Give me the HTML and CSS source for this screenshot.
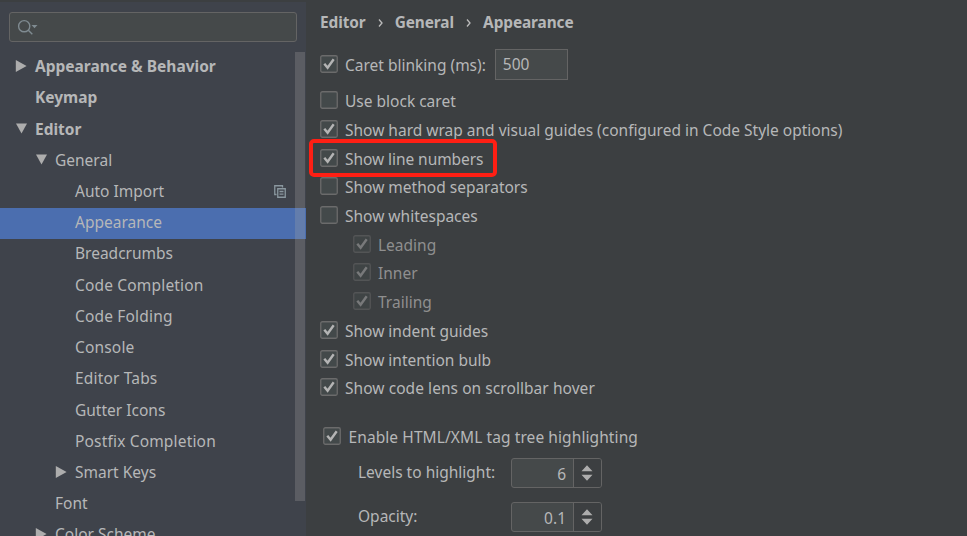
FILE: index.html
```html
<!DOCTYPE html>
<html lang="en">
<head>
<meta charset="utf-8">
<title>Settings</title>
<link rel="stylesheet" href="styles.css">
</head>
<body>
<svg class="defs" width="0" height="0">
  <symbol id="on" viewBox="0 0 18 18"><rect class="box" x=".75" y=".75" width="16.5" height="16.5" rx="1.5"/><path class="tick" d="M4.3 8.7 7.6 12.8 13.7 4.2"/></symbol>
  <symbol id="off" viewBox="0 0 18 18"><rect class="box" x=".75" y=".75" width="16.5" height="16.5" rx="1.5"/></symbol>
  <symbol id="right" viewBox="0 0 12 12"><path d="M.8 0 11.6 6 .8 12z"/></symbol>
  <symbol id="down" viewBox="0 0 12 12"><path d="M1 .6H12L6.5 10.6z"/></symbol>
  <symbol id="arrows" viewBox="0 0 12 18"><path d="M.5 7.2 6 1.2 11.5 7.2zM.5 10.8H11.5L6 16.8z"/></symbol>
</svg>
<div class="window">
  <aside class="sidebar">
    <div class="search">
      <svg width="22" height="18" viewBox="0 0 22 18"><circle cx="7.2" cy="7.2" r="5.6"/><path d="M11.3 11.3 15.3 15.3"/><path class="fill" d="M14.5 6H20.5L17.5 9.2z"/></svg>
    </div>
    <nav class="tree">
      <div class="node l0 bold"><svg class="arrow"><use href="#right"/></svg><span>Appearance &amp; Behavior</span></div>
      <div class="node l0 bold"><i class="arrow"></i><span>Keymap</span></div>
      <div class="node l0 bold"><svg class="arrow"><use href="#down"/></svg><span>Editor</span></div>
      <div class="node l1"><svg class="arrow"><use href="#down"/></svg><span>General</span></div>
      <div class="node l2"><i class="arrow"></i><span>Auto Import</span><svg class="copy" width="12" height="13" viewBox="0 0 12 13"><path d="M2.5 9.5H.75V.75H8.5V2.5M3.75 3.75H11.25V12.25H3.75zM5.5 6.5H9.5M5.5 9.2H9.5"/></svg></div>
      <div class="node l2 selected"><i class="arrow"></i><span>Appearance</span></div>
      <div class="node l2"><i class="arrow"></i><span>Breadcrumbs</span></div>
      <div class="node l2 wide"><i class="arrow"></i><span>Code Completion</span></div>
      <div class="node l2 wide"><i class="arrow"></i><span>Code Folding</span></div>
      <div class="node l2 wide"><i class="arrow"></i><span>Console</span></div>
      <div class="node l2 wide"><i class="arrow"></i><span>Editor Tabs</span></div>
      <div class="node l2"><i class="arrow"></i><span>Gutter Icons</span></div>
      <div class="node l2 wide"><i class="arrow"></i><span>Postfix Completion</span></div>
      <div class="node l1 deep"><svg class="arrow"><use href="#right"/></svg><span>Smart Keys</span></div>
      <div class="node l1"><i class="arrow"></i><span>Font</span></div>
      <div class="node l1"><svg class="arrow"><use href="#right"/></svg><span>Color Scheme</span></div>
      <div class="scrollbar"></div>
    </nav>
  </aside>
  <main class="content">
    <div class="crumbs"><span>Editor</span><svg class="sep" viewBox="0 0 5 8"><path d="M1 .5 4 4 1 7.5"/></svg><span>General</span><svg class="sep" viewBox="0 0 5 8"><path d="M1 .5 4 4 1 7.5"/></svg><span>Appearance</span></div>
    <div class="option caret"><svg class="check"><use href="#on"/></svg><span>Caret blinking (ms):</span><div class="field">500</div></div>
    <div class="options">
      <div class="option"><svg class="check"><use href="#off"/></svg><span>Use block caret</span></div>
      <div class="option"><svg class="check"><use href="#on"/></svg><span>Show hard wrap and visual guides (configured in Code Style options)</span></div>
      <div class="option marked"><svg class="check"><use href="#on"/></svg><span>Show line numbers</span></div>
      <div class="option"><svg class="check"><use href="#off"/></svg><span>Show method separators</span></div>
      <div class="option"><svg class="check"><use href="#off"/></svg><span>Show whitespaces</span></div>
      <div class="option sub"><svg class="check"><use href="#on"/></svg><span>Leading</span></div>
      <div class="option sub"><svg class="check"><use href="#on"/></svg><span>Inner</span></div>
      <div class="option sub"><svg class="check"><use href="#on"/></svg><span>Trailing</span></div>
      <div class="option"><svg class="check"><use href="#on"/></svg><span>Show indent guides</span></div>
      <div class="option"><svg class="check"><use href="#on"/></svg><span>Show intention bulb</span></div>
      <div class="option lens"><svg class="check"><use href="#on"/></svg><span>Show code lens on scrollbar hover</span></div>
    </div>
    <div class="option tags"><svg class="check"><use href="#on"/></svg><span>Enable HTML/XML tag tree highlighting</span></div>
    <div class="setting"><span class="label">Levels to highlight:</span><div class="spinner"><b>6</b><i><svg width="12" height="18"><use href="#arrows"/></svg></i></div></div>
    <div class="setting"><span class="label">Opacity:</span><div class="spinner"><b>0.1</b><i><svg width="12" height="18"><use href="#arrows"/></svg></i></div></div>
  </main>
</div>
</body>
</html>
```
FILE: styles.css
```css
*, *::after { box-sizing: border-box; }
body { margin: 0; background: #3c3f41; color: #b6b7b8; font: 15.5px/22px "Noto Sans", "Open Sans", sans-serif; }
.defs { position: absolute; }
.window { display: flex; width: 967px; height: 536px; overflow: hidden; }
span { white-space: nowrap; }

.sidebar { width: 306px; flex: none; background: #3f434b; border-top: 2px solid #3c3f41; padding-top: 10px; }
.search { width: 288px; height: 30px; margin-left: 9px; border: 1px solid #646464; border-radius: 3px; background: #45494a; padding: 6px 0 0 7px; }
.search svg { display: block; fill: none; stroke: #7f8b91; stroke-width: 1.4; }
.search .fill { fill: #7f8b91; stroke: none; }
.tree { position: relative; margin-top: 9.5px; }
.node { display: flex; align-items: center; height: 31.22px; }
.node span { padding-bottom: 2px; }
.l0 { padding-left: 15px; }
.l1 { padding-left: 35px; }
.l2, .deep { padding-left: 55px; }
.wide { letter-spacing: .17px; }
.arrow { width: 12px; height: 12px; margin: 0 8px 2px 0; flex: none; fill: #adadad; }
.bold, .crumbs { font-weight: 700; }
.selected { background: #4b6eaf; }
.copy { margin: 0 20.5px 1px auto; fill: none; stroke: #8a979f; stroke-width: 1.3; }
.scrollbar { position: absolute; left: 295px; top: .5px; width: 10px; height: 449px; background: rgba(166, 166, 166, .27); }

.content { flex: 1; padding: 12px 0 0 14px; }
.crumbs { display: flex; align-items: center; height: 22px; font-size: 15.4px; letter-spacing: -.1px; }
.sep { width: 5px; height: 8px; margin: 0 12.1px; fill: none; stroke: #bbbbbb; stroke-width: 1.3; }
.option { display: flex; align-items: center; height: 28.7px; }
.check { width: 18px; height: 18px; margin: 0 7.5px 0 -.5px; flex: none; }
.box { fill: #43494a; stroke: #6b6b6b; stroke-width: 1.3; }
.tick { fill: none; stroke: #b4b4b4; stroke-width: 2.4; }
.option span { padding-top: 1px; }
.options .check { margin-bottom: 1px; }
.caret { height: 30px; margin-top: 15px; }
.caret .check { margin-bottom: 1px; }
.field { width: 73px; height: 31px; margin-left: 9px; padding: 3px 7px; border: 1px solid #646464; background: #45494a; }
.options { margin-top: 7.5px; }
.sub { margin-left: 33px; color: #8f8f8f; }
.sub .check { opacity: .5; }
.lens { letter-spacing: .06px; }
.marked { position: relative; letter-spacing: -.06px; }
.marked::after { content: ""; position: absolute; left: -11px; top: -4.4px; width: 188px; height: 38px; border: 4px solid #ff1f14; border-radius: 5px; }
.tags { margin: 20px 0 0 3.5px; letter-spacing: .09px; }
.setting { display: flex; align-items: center; height: 30px; margin: 7px 0 14px 38px; }
.setting .label { width: 153px; padding-bottom: 2px; }
.spinner { display: flex; width: 91px; height: 30px; border: 1px solid #646464; border-radius: 3px; background: #45494a; overflow: hidden; }
.spinner b { width: 61px; padding: 4px 7px 0 0; text-align: right; font-weight: 400; }
.spinner i { display: flex; flex: 1; align-items: center; justify-content: center; padding-right: 1px; border-left: 1px solid #646464; background: #3c3f41; fill: #adadad; }
```
